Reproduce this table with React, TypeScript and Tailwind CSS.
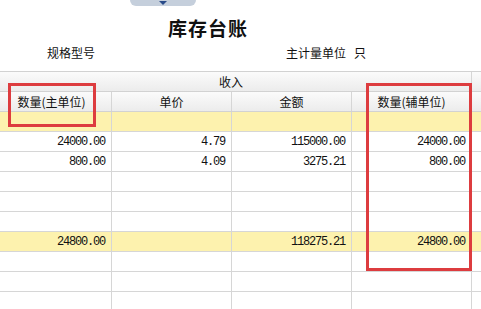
import React from "react";

const cjk = { fontFamily: '"Noto Sans CJK SC", "Noto Sans", sans-serif' };
const mono = { fontFamily: '"Liberation Mono", "DejaVu Sans Mono", monospace' };

type Row = { a?: string; b?: string; c?: string; d?: string; yellow?: boolean };

const rows: Row[] = [
  { yellow: true },
  { a: "24000.00", b: "4.79", c: "115000.00", d: "24000.00" },
  { a: "800.00", b: "4.09", c: "3275.21", d: "800.00" },
  {},
  {},
  {},
  { a: "24800.00", c: "118275.21", d: "24800.00", yellow: true },
  {},
  {},
  {},
];

function Num({ v, w }: { v?: string; w: string }) {
  return (
    <div
      className={`${w} h-full border-r border-[#d6d6d6] flex items-center justify-end pr-[6px] text-[12px] tracking-[-1.2px] text-[#111]`}
      style={mono}
    >
      {v}
    </div>
  );
}

export default function App() {
  return (
    <div className="relative w-[481px] h-[309px] overflow-hidden bg-white" style={cjk}>
      {/* top tab */}
      <div className="absolute left-[130px] top-0 w-[66px] h-[6px] rounded-b-[7px] bg-[#c5cfdc] flex justify-center">
        <div className="w-0 h-0 mt-[1px] border-l-[4px] border-r-[4px] border-t-[4px] border-l-transparent border-r-transparent border-t-[#2a4c8a]" />
      </div>

      {/* title block */}
      <div className="h-[71px] flex flex-col">
        <div className="h-[45px] pt-[16px] flex pl-[168px]">
          <span className="text-[19px] leading-[24px] font-bold tracking-[1px] text-[#111]">库存台账</span>
        </div>
        <div className="flex items-center h-[16px] text-[12px] text-[#111]">
          <span className="ml-[47px]">规格型号</span>
          <span className="ml-[191px]">主计量单位</span>
          <span className="ml-[8px]">只</span>
        </div>
      </div>

      {/* header row 1 */}
      <div className="h-[21px] flex border-t border-b border-[#d2d2d2] bg-gradient-to-b from-[#fbfbfb] to-[#ececec] text-[12px] text-[#111]">
        <div className="w-[472px] border-r border-[#d6d6d6] flex items-center justify-center pr-[9px]">收入</div>
        <div className="flex-1" />
      </div>
      {/* header row 2 */}
      <div className="h-[20px] flex border-b border-[#d2d2d2] bg-gradient-to-b from-[#fbfbfb] to-[#ececec] text-[12px] text-[#111]">
        <div className="w-[112px] border-r border-[#d6d6d6] flex items-center justify-center pr-[8px]">数量(主单位)</div>
        <div className="w-[120px] border-r border-[#d6d6d6] flex items-center justify-center">单价</div>
        <div className="w-[120px] border-r border-[#d6d6d6] flex items-center justify-center">金额</div>
        <div className="w-[120px] border-r border-[#d6d6d6] flex items-center justify-center">数量(辅单位)</div>
        <div className="flex-1" />
      </div>

      {rows.map((r, i) => (
        <div
          key={i}
          className={`h-[20px] flex border-b border-[#d6d6d6] ${r.yellow ? "bg-[#fdf2ae]" : "bg-white"}`}
        >
          <Num v={r.a} w="w-[112px]" />
          <Num v={r.b} w="w-[120px]" />
          <Num v={r.c} w="w-[120px]" />
          <Num v={r.d} w="w-[120px]" />
          <div className="flex-1" />
        </div>
      ))}

      {/* red highlight boxes */}
      <div className="absolute left-[8px] top-[83px] w-[88px] h-[44px] border-[3px] border-[#dd3c3f]" />
      <div className="absolute left-[366px] top-[83px] w-[106px] h-[188px] border-[3px] border-[#dd3c3f]" />
    </div>
  );
}
